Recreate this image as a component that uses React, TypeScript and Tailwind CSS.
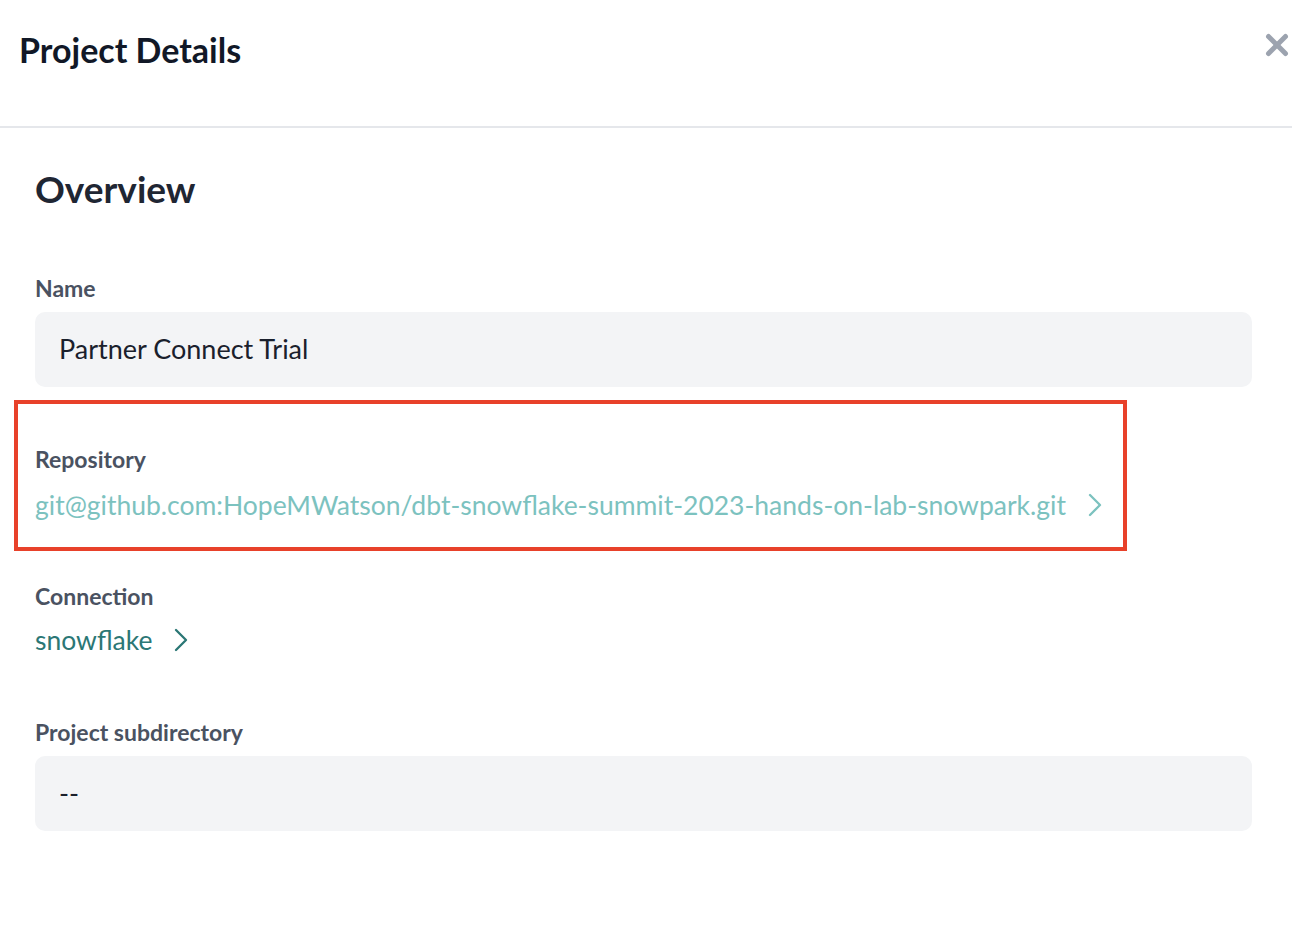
import { ChevronRight, X } from 'lucide-react'

const font = { fontFamily: 'Lato, "Noto Sans", sans-serif' }

function Label({ children }: { children: React.ReactNode }) {
  return <div className="text-[23px] font-bold leading-[28px] text-[#4a5261]">{children}</div>
}

function ReadonlyBox({ children }: { children: React.ReactNode }) {
  return (
    <div className="mt-[10px] flex h-[75px] w-[1217px] items-center rounded-[10px] bg-[#f3f4f6] px-6 text-[27px] text-[#1a202c]">
      {children}
    </div>
  )
}

export default function App() {
  return (
    <div className="min-h-screen bg-white" style={font}>
      <header className="relative h-[128px] border-b-2 border-[#e5e7eb]">
        <h1 className="pl-[19px] pt-[30px] text-[34px] font-bold leading-[40px] text-[#111827]">Project Details</h1>
        <button type="button" className="absolute right-[-2px] top-[28px] text-[#9ca3af]" aria-label="Close">
          <X size={34} strokeWidth={3.5} />
        </button>
      </header>

      <main className="pl-[35px]">
        <h2 className="mt-[37px] text-[37px] font-bold leading-[48px] text-[#1f2633]">Overview</h2>

        <section className="mt-[61px]">
          <Label>Name</Label>
          <ReadonlyBox>Partner Connect Trial</ReadonlyBox>
        </section>

        <section className="relative mt-[58px]">
          <Label>Repository</Label>
          <a className="mt-[14px] flex h-[36px] items-center gap-[9px] text-[26.5px] leading-[36px] text-[#7cc2bf]">
            git@github.com:HopeMWatson/dbt-snowflake-summit-2023-hands-on-lab-snowpark.git
            <ChevronRight size={40} strokeWidth={1.4} className="-my-[2px]" />
          </a>
          <div className="pointer-events-none absolute left-[-21px] top-[-45px] h-[151px] w-[1113px] border-[4px] border-[#e8412a]" />
        </section>

        <section className="mt-[59px]">
          <Label>Connection</Label>
          <a className="mt-[12px] flex h-[36px] items-center gap-[9px] text-[26.5px] leading-[36px] text-[#2b7775]">
            snowflake
            <ChevronRight size={40} strokeWidth={1.4} className="-my-[2px]" />
          </a>
        </section>

        <section className="mt-[60px]">
          <Label>Project subdirectory</Label>
          <ReadonlyBox>--</ReadonlyBox>
        </section>
      </main>
    </div>
  )
}
